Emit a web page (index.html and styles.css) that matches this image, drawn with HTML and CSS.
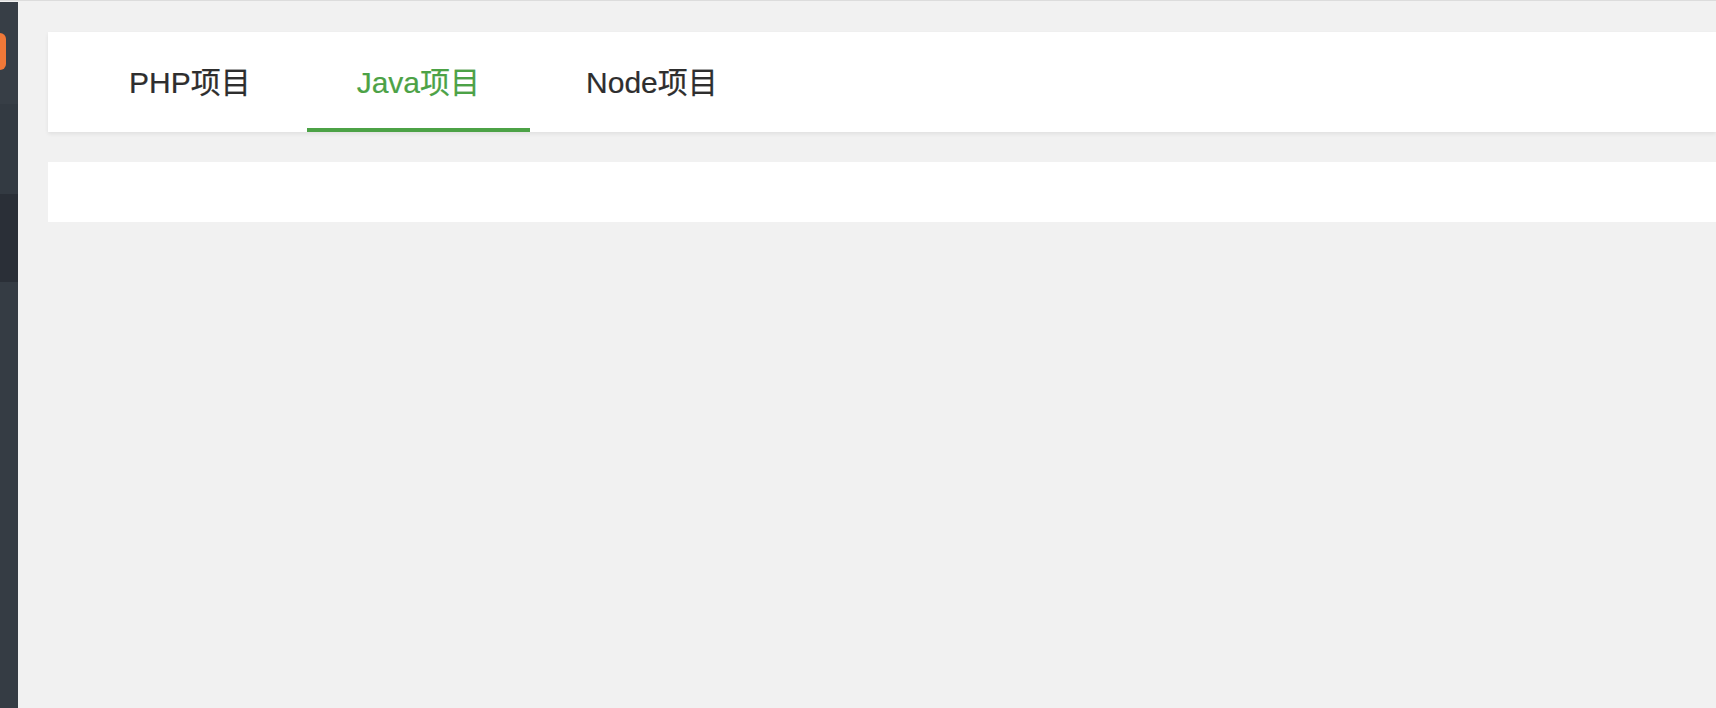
FILE: index.html
```html
<!DOCTYPE html>
<html lang="zh-CN">
<head>
<meta charset="utf-8">
<title>项目</title>
<link rel="stylesheet" href="styles.css">
</head>
<body>
<div class="topline"></div>
<div class="layout">
  <aside class="sidebar">
    <div class="sb-logo"><span class="logo-badge"></span></div>
    <div class="sb-item"></div>
    <div class="sb-item sb-active"></div>
    <div class="sb-rest"></div>
  </aside>
  <main class="main">
    <div class="card tabs-card">
      <nav class="tabs">
        <a class="tab">PHP项目</a>
        <a class="tab tab-active">Java项目</a>
        <a class="tab">Node项目</a>
      </nav>
    </div>
    <div class="card empty-card"></div>
  </main>
</div>
</body>
</html>
```
FILE: styles.css
```css
html, body {
  margin: 0;
  padding: 0;
  height: 100%;
  overflow: hidden;
  background: #f1f1f1;
  font-family: "Liberation Sans", Arial, "Noto Sans CJK SC", sans-serif;
}
.topline {
  height: 1px;
  border-top: 1px solid #dcdcdc;
  background: #f1f1f1;
}
.layout {
  display: flex;
  height: calc(100% - 2px);
}
.sidebar {
  width: 18px;
  flex: 0 0 18px;
  display: flex;
  flex-direction: column;
  background: #353c44;
}
.sb-logo {
  height: 102px;
  background: #373e46;
  padding-top: 31px;
  box-sizing: border-box;
}
.logo-badge {
  display: block;
  width: 6px;
  height: 37px;
  background: #f07838;
  border-radius: 0 6px 6px 0;
}
.sb-item {
  height: 90px;
  background: #333a42;
}
.sb-active {
  height: 88px;
  background: #2a2f37;
}
.sb-rest {
  flex: 1;
  background: #353c44;
}
.main {
  flex: 1;
  padding: 30px 0 0 30px;
  min-width: 0;
}
.card {
  background: #fff;
}
.tabs-card {
  height: 100px;
  box-shadow: 0 2px 4px rgba(0, 0, 0, 0.07);
}
.tabs {
  display: flex;
  gap: 6px;
  height: 100%;
  padding-left: 31px;
}
.tab {
  display: flex;
  align-items: center;
  padding: 0 50px;
  font-size: 30px;
  color: #2e2e2e;
  box-sizing: border-box;
  border-bottom: 4px solid transparent;
  cursor: pointer;
  -webkit-text-stroke: 0.2px currentColor;
}
.tab-active {
  color: #4ca246;
  border-bottom-color: #4ca246;
}
.empty-card {
  height: 60px;
  margin-top: 30px;
}
```
